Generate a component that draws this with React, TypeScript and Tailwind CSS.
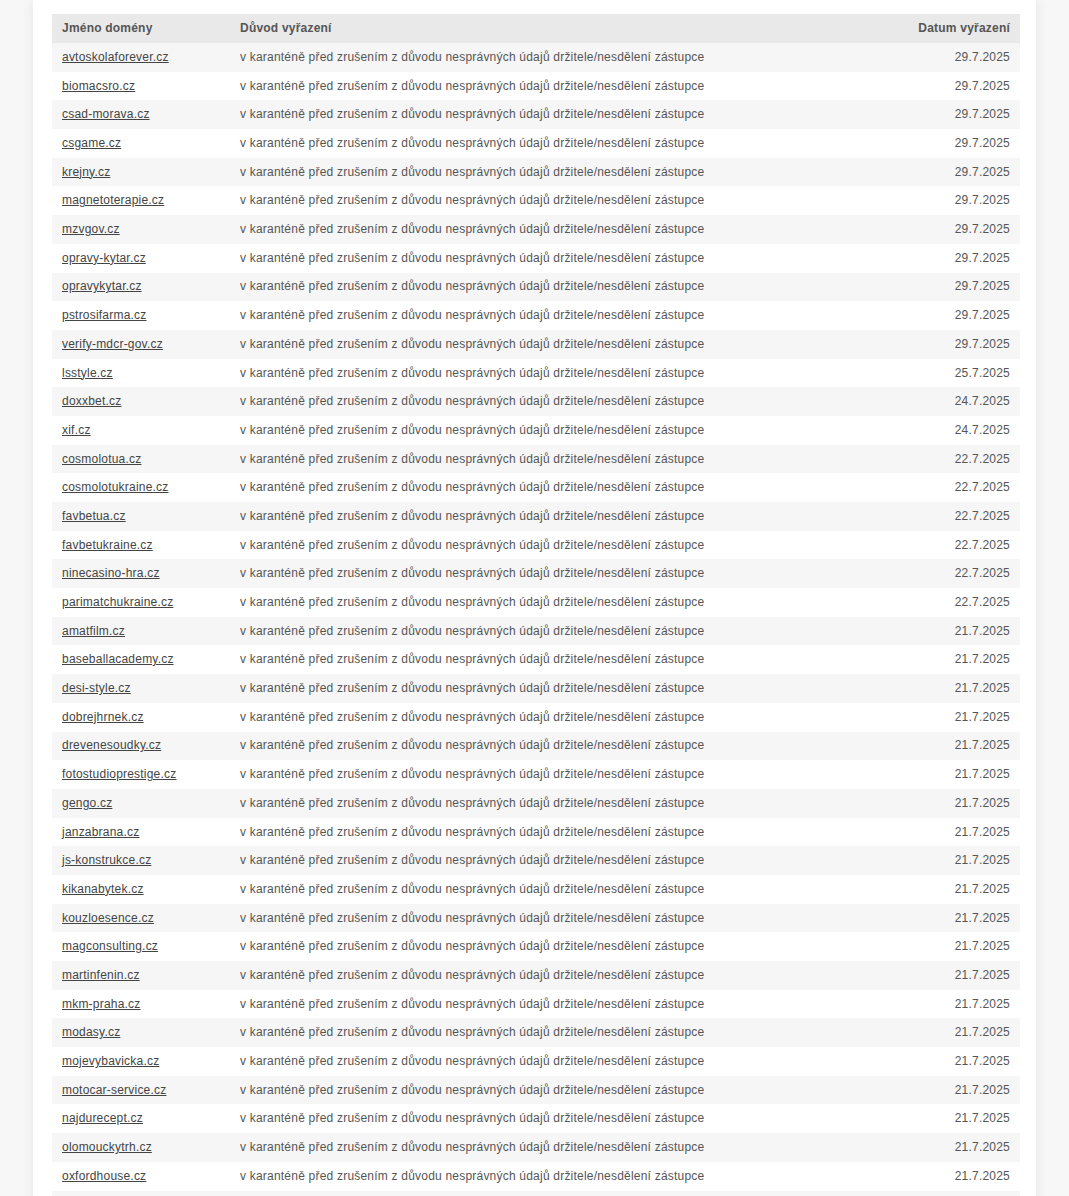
import React from "react";

const rows: [string, string][] = [
  ["avtoskolaforever.cz", "29.7.2025"],
  ["biomacsro.cz", "29.7.2025"],
  ["csad-morava.cz", "29.7.2025"],
  ["csgame.cz", "29.7.2025"],
  ["krejny.cz", "29.7.2025"],
  ["magnetoterapie.cz", "29.7.2025"],
  ["mzvgov.cz", "29.7.2025"],
  ["opravy-kytar.cz", "29.7.2025"],
  ["opravykytar.cz", "29.7.2025"],
  ["pstrosifarma.cz", "29.7.2025"],
  ["verify-mdcr-gov.cz", "29.7.2025"],
  ["lsstyle.cz", "25.7.2025"],
  ["doxxbet.cz", "24.7.2025"],
  ["xif.cz", "24.7.2025"],
  ["cosmolotua.cz", "22.7.2025"],
  ["cosmolotukraine.cz", "22.7.2025"],
  ["favbetua.cz", "22.7.2025"],
  ["favbetukraine.cz", "22.7.2025"],
  ["ninecasino-hra.cz", "22.7.2025"],
  ["parimatchukraine.cz", "22.7.2025"],
  ["amatfilm.cz", "21.7.2025"],
  ["baseballacademy.cz", "21.7.2025"],
  ["desi-style.cz", "21.7.2025"],
  ["dobrejhrnek.cz", "21.7.2025"],
  ["drevenesoudky.cz", "21.7.2025"],
  ["fotostudioprestige.cz", "21.7.2025"],
  ["gengo.cz", "21.7.2025"],
  ["janzabrana.cz", "21.7.2025"],
  ["js-konstrukce.cz", "21.7.2025"],
  ["kikanabytek.cz", "21.7.2025"],
  ["kouzloesence.cz", "21.7.2025"],
  ["magconsulting.cz", "21.7.2025"],
  ["martinfenin.cz", "21.7.2025"],
  ["mkm-praha.cz", "21.7.2025"],
  ["modasy.cz", "21.7.2025"],
  ["mojevybavicka.cz", "21.7.2025"],
  ["motocar-service.cz", "21.7.2025"],
  ["najdurecept.cz", "21.7.2025"],
  ["olomouckytrh.cz", "21.7.2025"],
  ["oxfordhouse.cz", "21.7.2025"],
];

const reason =
  "v karanténě před zrušením z důvodu nesprávných údajů držitele/nesdělení zástupce";

export default function App() {
  return (
    <div className="min-h-screen bg-[#f7f7f7] font-['Liberation_Sans',Arial,sans-serif] text-[12px] tracking-[0.21px] text-[#555]">
      <div className="ml-[33px] w-[1003px] bg-white pt-[14px] pl-[19px] pr-[16px] pb-6 shadow-[0_0_12px_rgba(0,0,0,0.08)]">
        <table className="w-full table-fixed border-collapse">
          <colgroup>
            <col className="w-[178px]" />
            <col />
            <col className="w-[200px]" />
          </colgroup>
          <thead>
            <tr className="bg-[#e9e9e9]">
              <th className="h-[29px] px-[10px] text-left font-bold text-[#555] leading-[1.4]">
                Jméno domény
              </th>
              <th className="px-[10px] text-left font-bold text-[#555] leading-[1.4]">
                Důvod vyřazení
              </th>
              <th className="px-[10px] text-right font-bold text-[#555] leading-[1.4]">
                Datum vyřazení
              </th>
            </tr>
          </thead>
          <tbody>
            {rows.map(([d, date], i) => (
              <tr key={d} className={i % 2 === 0 ? "bg-[#f6f6f6]" : "bg-white"}>
                <td className="h-[28.7px] px-[10px] py-0 leading-[1.4]">
                  <a href="#" className="text-[#444] underline underline-offset-[1px]">
                    {d}
                  </a>
                </td>
                <td className="px-[10px] leading-[1.4] text-[#555]">{reason}</td>
                <td className="px-[10px] text-right leading-[1.4] text-[#555]">{date}</td>
              </tr>
            ))}
            <tr className="bg-[#f6f6f6]">
              <td className="h-[28.7px]" />
              <td />
              <td />
            </tr>
          </tbody>
        </table>
      </div>
    </div>
  );
}
